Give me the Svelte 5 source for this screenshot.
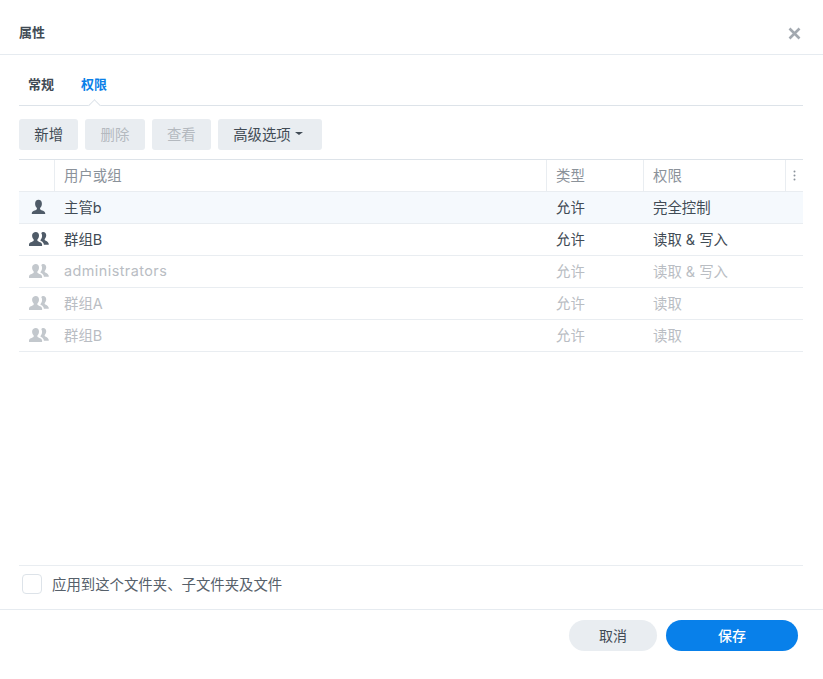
<script>
  const rows = [
    { kind: 'user', name: '主管b', type: '允许', perm: '完全控制', selected: true },
    { kind: 'group', name: '群组B', type: '允许', perm: '读取 & 写入' },
    { kind: 'group', name: 'administrators', type: '允许', perm: '读取 & 写入', muted: true, latin: true },
    { kind: 'group', name: '群组A', type: '允许', perm: '读取', muted: true },
    { kind: 'group', name: '群组B', type: '允许', perm: '读取', muted: true }
  ];
</script>

<div class="dialog">
  <header class="title">
    <span class="title-text">属性</span>
    <svg class="close" width="13" height="13" viewBox="0 0 13 13" aria-hidden="true">
      <path d="M1.5 1.5 L11.5 11.5 M11.5 1.5 L1.5 11.5" stroke="#a3a9b0" stroke-width="2.6" fill="none" />
    </svg>
  </header>

  <div class="body">
    <nav class="tabs">
      <span class="tab">常规</span>
      <span class="tab active">权限</span>
    </nav>

    <div class="toolbar">
      <button class="btn">新增</button>
      <button class="btn disabled">删除</button>
      <button class="btn disabled">查看</button>
      <button class="btn more">高级选项<span class="caret"></span></button>
    </div>

    <div class="table">
      <div class="row head">
        <div class="cell icon"></div>
        <div class="cell">用户或组</div>
        <div class="cell">类型</div>
        <div class="cell">权限</div>
        <div class="cell menu">
          <svg width="3" height="11" viewBox="0 0 3 11" aria-hidden="true">
            <circle cx="1.5" cy="1.5" r="1" fill="#8a929b" />
            <circle cx="1.5" cy="5.5" r="1" fill="#8a929b" />
            <circle cx="1.5" cy="9.5" r="1" fill="#8a929b" />
          </svg>
        </div>
      </div>
      {#each rows as r}
        <div class="row item" class:selected={r.selected} class:muted={r.muted}>
          <div class="cell icon">
            {#if r.kind === 'user'}
              <svg width="17" height="17" viewBox="0 0 16 16" aria-hidden="true">
                <path class="glyph" d="M8 .8c2 0 3.200 1.500 3.200 3.600 0 1.700-.7 3-1.500 3.800-.4.4-.3 1.200 0 1.600.9.9 4.600 1.300 4.600 3.600v.8H1.700v-.8c0-2.300 3.700-2.700 4.600-3.600.3-.4.4-1.200 0-1.600-.8-.8-1.500-2.100-1.500-3.800C4.800 2.300 6 .8 8 .8z" />
              </svg>
            {:else}
              <svg width="22" height="17" viewBox="0 0 20 16" aria-hidden="true">
                <path class="glyph" d="M7 1c1.800 0 3 1.400 3 3.300 0 1.500-.6 2.800-1.300 3.500-.4.4-.3 1.100 0 1.500.8.800 4 1.200 4.200 3.200v1.500H.6v-1.500c.2-2 3.400-2.400 4.200-3.200.3-.4.4-1.100 0-1.500C4.100 7.100 3.500 5.800 3.500 4.300 3.500 2.400 5.200 1 7 1z" />
                <path class="glyph" d="M14 1c1.700 0 2.800 1.300 2.800 3.100 0 1.400-.6 2.600-1.200 3.300-.4.400-.3 1 0 1.400.7.700 2.900 1.100 3.500 2.900.1.500.1 1.100.1 1.300h-4.600c0-1.900-1.400-2.800-2.700-3.500-.5-.3-.6-1-.2-1.600.7-.9 1.200-2 1.200-3.300 0-1.100-.3-2-.8-2.700.4-.3 1.200-.9 1.900-.9z" />
              </svg>
            {/if}
          </div>
          <div class="cell" class:latin={r.latin}>{r.name}</div>
          <div class="cell">{r.type}</div>
          <div class="cell">{r.perm}</div>
          <div class="cell"></div>
        </div>
      {/each}
    </div>

    <label class="apply">
      <span class="box"></span>
      <span>应用到这个文件夹、子文件夹及文件</span>
    </label>
  </div>

  <footer class="footer">
    <button class="pill cancel">取消</button>
    <button class="pill save">保存</button>
  </footer>
</div>

<style>
  :global(body) {
    margin: 0;
    background: #fff;
  }
  .dialog {
    width: 823px;
    height: 679px;
    display: flex;
    flex-direction: column;
    font-family: Inter, "Noto Sans CJK SC", sans-serif;
    font-size: 14.4px;
    color: #414b55;
    box-sizing: border-box;
  }
  .title {
    height: 55px;
    flex: none;
    box-sizing: border-box;
    border-bottom: 1px solid #e6ebf0;
    display: flex;
    align-items: center;
    justify-content: space-between;
    padding: 12px 22px 0 19px;
  }
  .title-text {
    font-size: 13px;
    font-weight: 600;
    margin-top: -4px;
  }
  .body {
    flex: 1;
    min-height: 0;
    display: flex;
    flex-direction: column;
    padding: 0 20px 0 19px;
  }
  .tabs {
    height: 51px;
    flex: none;
    box-sizing: border-box;
    border-bottom: 1px solid #dde3e9;
    display: flex;
    align-items: center;
    gap: 27px;
    padding: 7px 0 0 9px;
  }
  .tab {
    position: relative;
    font-size: 13px;
    font-weight: 600;
    line-height: 18px;
  }
  .tab.active {
    color: #0a80e8;
  }
  .tab.active::before {
    content: "";
    position: absolute;
    left: 9px;
    bottom: -17px;
    width: 8px;
    height: 8px;
    background: #fff;
    border-left: 1px solid #dde3e9;
    border-top: 1px solid #dde3e9;
    transform: rotate(45deg);
  }
  .toolbar {
    display: flex;
    gap: 7px;
    margin-top: 13px;
    flex: none;
  }
  .btn {
    height: 31px;
    width: 59.33px;
    padding: 0 0 2px;
    border: 0;
    border-radius: 3px;
    background: #e9edf1;
    color: #414b55;
    font: inherit;
    display: flex;
    align-items: center;
    justify-content: center;
  }
  .btn.more {
    width: 104px;
    padding-right: 4px;
  }
  .btn.disabled {
    color: #b4b9bf;
  }
  .caret {
    width: 0;
    height: 0;
    margin-left: 4px;
    border-left: 4px solid transparent;
    border-right: 4px solid transparent;
    border-top: 3px solid #414b55;
  }
  .table {
    margin-top: 9px;
    border-top: 1px solid #dde3e9;
    flex: none;
  }
  .row {
    display: grid;
    grid-template-columns: 35px 492px 97px 142px 18px;
    height: 32px;
    box-sizing: border-box;
    border-bottom: 1px solid #e9edf1;
    align-items: stretch;
  }
  .cell {
    display: flex;
    align-items: center;
    padding: 0 0 2px 10px;
    box-sizing: border-box;
    min-width: 0;
    white-space: nowrap;
  }
  .cell.latin {
    letter-spacing: 0.45px;
  }
  .cell.icon {
    padding: 0 0 1px 4px;
    justify-content: center;
  }
  .cell.menu {
    padding: 0;
    justify-content: center;
  }
  .head {
    color: #8b929a;
  }
  .head .cell + .cell {
    border-left: 1px solid #e9edf1;
    padding-left: 9px;
  }
  .head .cell.menu {
    padding-left: 0;
  }
  .selected {
    background: #f5f9fd;
  }
  .muted {
    color: #b9bdc3;
  }
  .glyph {
    fill: #4f5b68;
  }
  .muted .glyph {
    fill: #c3c8cd;
  }
  .apply {
    margin-top: auto;
    height: 44px;
    flex: none;
    box-sizing: border-box;
    border-top: 1px solid #e9edf1;
    display: flex;
    align-items: center;
    gap: 10px;
    padding: 0 0 8px 3px;
    color: #56606a;
  }
  .box {
    width: 20px;
    height: 20px;
    box-sizing: border-box;
    border: 1px solid #dde3e9;
    border-radius: 4px;
    background: #fff;
  }
  .footer {
    height: 70px;
    flex: none;
    box-sizing: border-box;
    border-top: 1px solid #e6ebf0;
    display: flex;
    justify-content: flex-end;
    gap: 9px;
    padding: 10px 25px 0 0;
  }
  .pill {
    height: 31px;
    border: 0;
    border-radius: 16px;
    font: inherit;
    font-size: 14px;
    padding: 0 0 1px;
  }
  .cancel {
    width: 88px;
    background: #e9edf1;
    color: #414b55;
  }
  .save {
    width: 132px;
    background: #0880ea;
    color: #fff;
    font-weight: 500;
  }
</style>
